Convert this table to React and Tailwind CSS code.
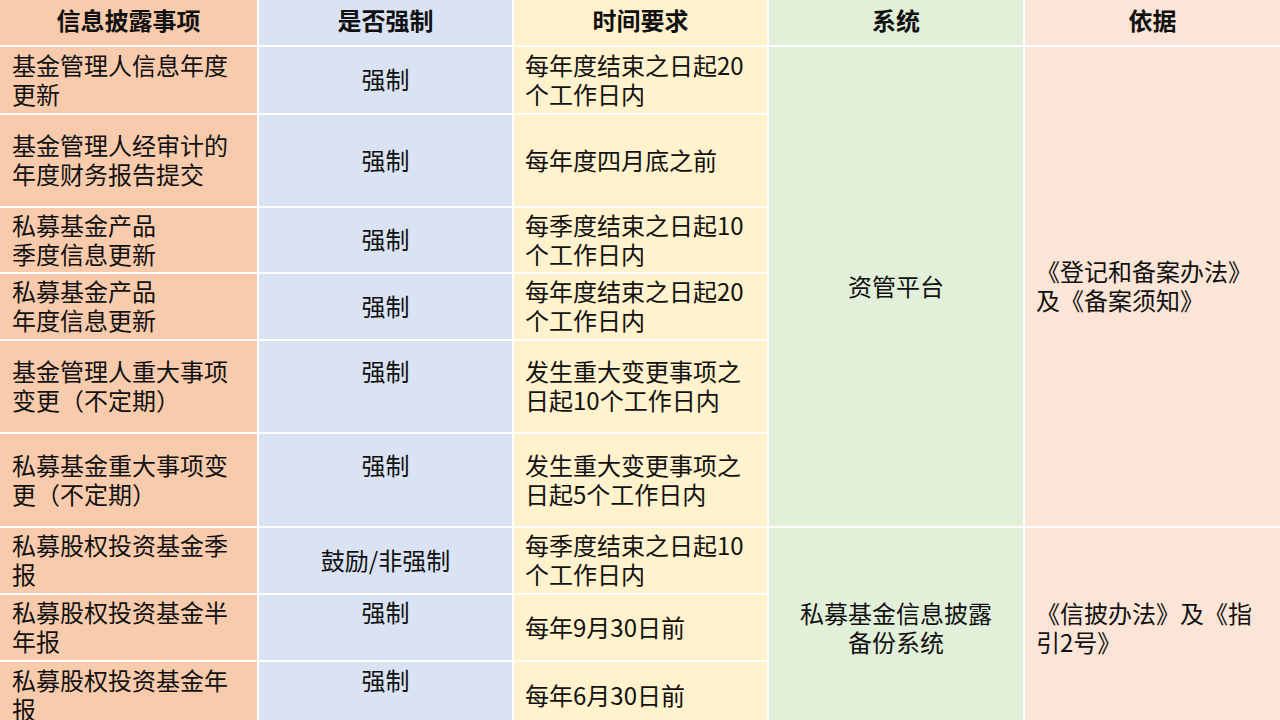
import React from "react";

const FONT = { fontFamily: '"Noto Sans CJK SC", "Liberation Sans", sans-serif' };

const COLORS = ["bg-[#f8cbad]", "bg-[#dae3f3]", "bg-[#fff2cc]", "bg-[#e2f0d9]", "bg-[#fbe5d6]"];

const headers = ["信息披露事项", "是否强制", "时间要求", "系统", "依据"];

// each row: [item lines, mandatory, extra blank line under mandatory?, time lines]
const rows = [
  [["基金管理人信息年度", "更新"], "强制", false, ["每年度结束之日起20", "个工作日内"]],
  [["基金管理人经审计的", "年度财务报告提交"], "强制", false, ["每年度四月底之前"]],
  [["私募基金产品", "季度信息更新"], "强制", false, ["每季度结束之日起10", "个工作日内"]],
  [["私募基金产品", "年度信息更新"], "强制", false, ["每年度结束之日起20", "个工作日内"]],
  [["基金管理人重大事项", "变更（不定期）"], "强制", true, ["发生重大变更事项之", "日起10个工作日内"]],
  [["私募基金重大事项变", "更（不定期）"], "强制", true, ["发生重大变更事项之", "日起5个工作日内"]],
  [["私募股权投资基金季", "报"], "鼓励/非强制", false, ["每季度结束之日起10", "个工作日内"]],
  [["私募股权投资基金半", "年报"], "强制", true, ["每年9月30日前"]],
  [["私募股权投资基金年", "报"], "强制", true, ["每年6月30日前"]],
];

const Lines = ({ lines }) => (
  <div>
    {lines.map((l, i) => (
      <div key={i}>{l}</div>
    ))}
  </div>
);

export default function App() {
  return (
    <div className="w-full h-screen overflow-hidden bg-white text-[#111] text-[24px] leading-[29px]" style={FONT}>
      <div className="grid grid-cols-[257px_253px_253px_254px_1fr] grid-rows-[45px_66px_91px_64px_65px_91px_92px_65px_65px_67px] gap-[2px]">
        {headers.map((h, i) => (
          <div
            key={h}
            className={`${COLORS[i]} flex items-center justify-center font-bold pb-[7px]`}
            style={{ gridColumn: i + 1, gridRow: 1 }}
          >
            {h}
          </div>
        ))}

        {rows.map(([item, mand, extra, time], r) => (
          <React.Fragment key={r}>
            <div
              className={`${COLORS[0]} flex items-center pl-[12px] pb-[3px]`}
              style={{ gridColumn: 1, gridRow: r + 2 }}
            >
              <Lines lines={item} />
            </div>
            <div
              className={`${COLORS[1]} flex items-center justify-center pb-[3px]`}
              style={{ gridColumn: 2, gridRow: r + 2 }}
            >
              <div className="text-center">
                <div>{mand}</div>
                {extra && <div>&nbsp;</div>}
              </div>
            </div>
            <div
              className={`${COLORS[2]} flex items-center pl-[11px] pb-[3px]`}
              style={{ gridColumn: 3, gridRow: r + 2 }}
            >
              <Lines lines={time} />
            </div>
          </React.Fragment>
        ))}

        <div className={`${COLORS[3]} col-start-4 row-start-2 row-span-6 flex items-center justify-center pb-[3px]`}>
          资管平台
        </div>
        <div className={`${COLORS[4]} col-start-5 row-start-2 row-span-6 flex items-center pl-[11px] pb-[3px]`}>
          <Lines lines={["《登记和备案办法》", "及《备案须知》"]} />
        </div>

        <div className={`${COLORS[3]} col-start-4 row-start-8 row-span-3 flex items-center justify-center text-center pb-[3px]`}>
          <Lines lines={["私募基金信息披露", "备份系统"]} />
        </div>
        <div className={`${COLORS[4]} col-start-5 row-start-8 row-span-3 flex items-center pl-[11px] pb-[3px]`}>
          <Lines lines={["《信披办法》及《指", "引2号》"]} />
        </div>
      </div>
    </div>
  );
}
